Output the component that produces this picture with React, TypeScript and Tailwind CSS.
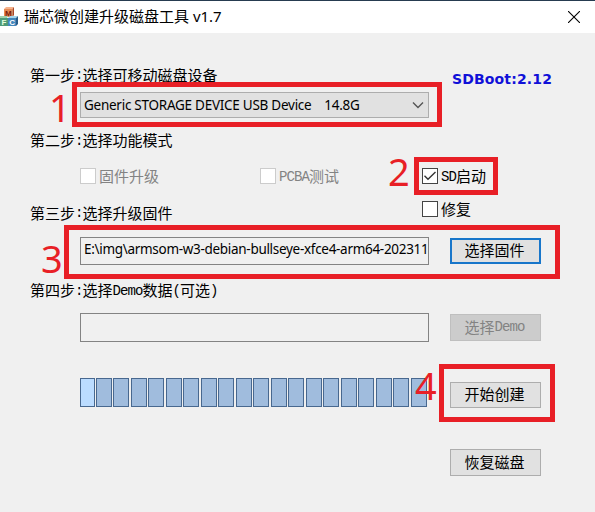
import React from "react";

const song = "font-['Liberation_Mono','Noto_Sans_CJK_SC',monospace]";
const tahoma = "font-['Noto_Sans','Noto_Sans_CJK_SC',sans-serif]";

function Text({ children, className = "" }: { children: string; className?: string }) {
  const parts = children.match(/[\u4e00-\u9fff]+|[^\u4e00-\u9fff]+/g) ?? [];
  return (
    <span className={`flex items-center whitespace-pre ${song} ${className}`}>
      {parts.map((part, i) =>
        /[\u4e00-\u9fff]/.test(part) ? (
          <span key={i} className="font-['Noto_Sans_CJK_SC',sans-serif] text-[15px] leading-4">
            {part}
          </span>
        ) : (
          <span key={i} className="pt-px text-[14px] leading-4 tracking-[-0.9px]">
            {part}
          </span>
        ),
      )}
    </span>
  );
}

function CheckBox({ label, checked = false, disabled = false }: { label: string; checked?: boolean; disabled?: boolean }) {
  return (
    <label className={`flex h-4 items-center gap-[3px] ${disabled ? "text-[#838383]" : "text-black"}`}>
      <span className={`size-4 shrink-0 border bg-white ${disabled ? "border-[#cccccc]" : "border-[#444444]"}`}>
        {checked && (
          <svg viewBox="0 0 14 14" className="size-3.5" fill="none" stroke="#333" strokeWidth="1.4">
            <path d="M1.500 6.800 5 10.300 12.500 3" />
          </svg>
        )}
      </span>
      <Text>{label}</Text>
    </label>
  );
}

function Button({ label, className }: { label: string; className: string }) {
  return (
    <button className={`flex w-[91px] shrink-0 items-center justify-center pr-0.5 pb-0.5 ${className}`}>
      <Text>{label}</Text>
    </button>
  );
}

function Mark({ digit, digitClass, boxClass }: { digit: string; digitClass: string; boxClass: string }) {
  return (
    <>
      <div className={`absolute border-[5px] border-[#e81f26] ${boxClass}`} />
      <span className={`absolute font-['Noto_Sans',sans-serif] text-[38px] leading-[28px] text-[#e81f26] ${digitClass}`}>
        {digit}
      </span>
    </>
  );
}

function AppIcon() {
  return (
    <svg viewBox="0 0 18 20" className="h-5 w-[18px] shrink-0">
      <path d="M4 2 6 0h8l-1.500 2z" fill="#f5b28c" />
      <path d="M4 2h8.500v8H4z" fill="#e58a55" />
      <path d="m12.500 2 1.500-2v8l-1.500 2z" fill="#a94724" />
      <path d="m-2 11 2-2h8l-1 2z" fill="#9fd2ae" />
      <path d="M-2 11h10v8H-2z" fill="#4e9b78" />
      <path d="m8 11 2-2h8l-2 2z" fill="#a5d5ee" />
      <path d="M8 11h8v8H8z" fill="#4387bc" />
      <path d="m16 11 2-2v8l-2 2z" fill="#285c89" />
      <g fontFamily="Liberation Sans, sans-serif" fontWeight="bold" fontSize="8">
        <text x="5" y="9" fill="#7a1c0c">M</text>
        <text x="1.500" y="18" fill="#e6ffdf">F</text>
        <text x="9.200" y="18" fill="#fff">C</text>
      </g>
    </svg>
  );
}

export default function App() {
  return (
    <div className="relative flex h-[512px] w-[595px] flex-col overflow-hidden bg-[#f0f0f0] text-black">
      <header className="flex h-[33px] shrink-0 items-center border-t border-[#263b50] bg-white">
        <AppIcon />
        <h1 className="ml-1.5 flex-1 pb-0.5 whitespace-pre font-['Noto_Sans','Noto_Sans_CJK_SC',sans-serif] text-[15px] leading-5">
          瑞芯微创建升级磁盘工具 v1.7
        </h1>
        <svg viewBox="0 0 12 12" className="mr-[15px] size-3" stroke="#000" strokeWidth="1.1">
          <path d="m0 0 12 12M12 0 0 12" />
        </svg>
      </header>

      <main className="flex flex-col pl-[30px]">
        <div className="mt-[33px] flex h-[26px] items-start">
          <Text className="w-[422px]">第一步:选择可移动磁盘设备</Text>
          <span className="pt-[3px] font-['DejaVu_Sans',sans-serif] text-[14px] leading-5 font-bold tracking-[0.15px] whitespace-nowrap text-[#1010d8]">
            SDBoot:2.12
          </span>
        </div>
        <div className={`ml-[50px] flex h-[26px] w-[349px] items-center justify-between border border-[#adadad] bg-[#e1e1e1] pr-1 pl-[3px] text-[13.5px] ${tahoma}`}>
          <span className="whitespace-pre tracking-[-0.26px]">
            Generic STORAGE DEVICE USB Device<span className="pl-[3px]">   14.8G</span>
          </span>
          <svg viewBox="0 0 12 8" className="h-2 w-3" fill="none" stroke="#555" strokeWidth="1.4">
            <path d="m1 1.500 5 5 5-5" />
          </svg>
        </div>
        <Text className="mt-[14px] h-4">第二步:选择功能模式</Text>

        <div className="mt-5 ml-[50px] flex h-4">
          <div className="w-[180px]"><CheckBox label="固件升级" disabled /></div>
          <div className="w-[162px]"><CheckBox label="PCBA测试" disabled /></div>
          <CheckBox label="SD启动" checked />
        </div>
        <div className="mt-[17px] flex h-5 items-start">
          <Text className="w-[392px] pt-[3px]">第三步:选择升级固件</Text>
          <CheckBox label="修复" />
        </div>

        <div className="mt-4 ml-[50px] flex h-7 items-center gap-[21px]">
          <div className={`flex h-7 w-[349px] items-center overflow-hidden border border-[#838383] pb-1 pl-[3px] text-[13.5px] tracking-[-0.3px] whitespace-nowrap ${tahoma}`}>
            E:\img\armsom-w3-debian-bullseye-xfce4-arm64-202311
          </div>
          <Button label="选择固件" className="h-[26px] border-2 border-[#1876ca] bg-[#e1e1e1]" />
        </div>
        <Text className="mt-[17px] h-4">第四步:选择Demo数据(可选)</Text>
        <div className="mt-[15px] ml-[50px] flex h-[29px] items-center gap-[21px]">
          <div className="h-[29px] w-[349px] border border-[#838383]" />
          <Button label="选择Demo" className="h-[27px] border border-[#bfbfbf] bg-[#cccccc] text-[#838383]" />
        </div>

        <div className="mt-9 ml-[50px] flex h-[30px]">
          <div className="flex h-[29px] w-[370px] gap-[1.500px]">
            <div className="-mr-[0.600px] w-[15px] border border-[#48688f] bg-[#bbdcff]" />
            {Array.from({ length: 19 }, (_, i) => (
              <div key={i} className="w-4 border border-[#48688f] bg-[#a0bcdd]" />
            ))}
          </div>
          <Button label="开始创建" className="mt-1 h-[26px] border border-[#adadad] bg-[#e1e1e1]" />
        </div>
        <Button label="恢复磁盘" className="mt-[41px] ml-[420px] h-[27px] border border-[#adadad] bg-[#e1e1e1]" />
      </main>

      <Mark digit="1" boxClass="left-[72px] top-[82px] h-[45px] w-[370px]" digitClass="left-[49px] top-[93px]" />
      <Mark digit="2" boxClass="left-[414px] top-[157px] h-[38px] w-[84px]" digitClass="left-[388px] top-[157px]" />
      <Mark digit="3" boxClass="left-[64px] top-[225px] h-[54px] w-[496px]" digitClass="left-[41px] top-[244px]" />
      <Mark digit="4" boxClass="left-[439px] top-[364px] h-[58px] w-[116px]" digitClass="left-[415px] top-[371px]" />
    </div>
  );
}
